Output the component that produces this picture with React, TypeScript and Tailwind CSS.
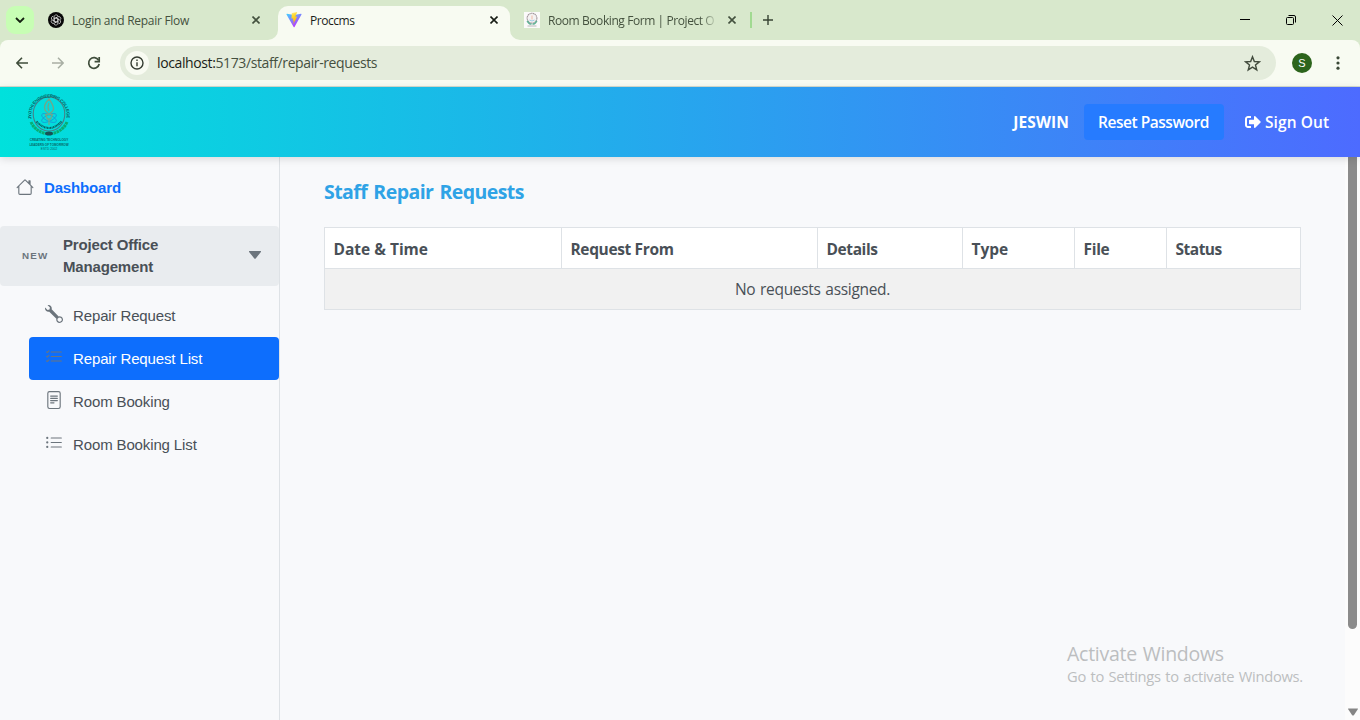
import type { ReactNode } from "react";
import { BsFileText, BsHouse, BsListCheck, BsListUl, BsWrench } from "react-icons/bs";
import { FaSignOutAlt } from "react-icons/fa";

const stroke = { fill: "none", stroke: "currentColor" } as const;

function CloseIcon({ className }: { className: string }) {
  return (
    <svg viewBox="0 0 8 8" className={`h-2 w-2 shrink-0 ${className}`} {...stroke} strokeWidth="1.6">
      <path d="M.5.5l7 7M7.5.5l-7 7" />
    </svg>
  );
}

function ChatIcon() {
  return (
    <svg viewBox="0 0 16 16" className="h-4 w-4 shrink-0">
      <circle cx="8" cy="8" r="8" fill="#080808" />
      <g fill="none" stroke="#d6d6d6" strokeWidth=".75">
        {[0, 60, 120, 180, 240, 300].map((a) => (
          <path key={a} transform={`rotate(${a} 8 8)`} d="M6.1 9.2V4.9a2.1 2.1 0 0 1 3.9-1M6.1 6.9l3.3-1.9" />
        ))}
      </g>
    </svg>
  );
}

function ViteIcon() {
  return (
    <svg viewBox="0 0 32 32" className="h-4 w-4 shrink-0">
      <defs>
        <linearGradient id="vite-a" x1="0" y1="0" x2=".6" y2="1">
          <stop offset="0" stopColor="#41d1ff" />
          <stop offset="1" stopColor="#bd34fe" />
        </linearGradient>
        <linearGradient id="vite-b" x1=".4" y1="0" x2=".6" y2="1">
          <stop offset="0" stopColor="#ffea83" />
          <stop offset=".2" stopColor="#ffdd35" />
          <stop offset="1" stopColor="#ffa800" />
        </linearGradient>
      </defs>
      <path d="M31 5L17 30a1 1 0 0 1-1.700 0L1 5a1 1 0 0 1 1-1.500l14 2.500 14-2.500A1 1 0 0 1 31 5z" fill="url(#vite-a)" />
      <path d="M22.500.200L12 2.200a.5.5 0 0 0-.4.4L11 13.300l3.500-.7-.9 5 2.200-.6-1.600 8 8.300-16-4 .7z" fill="url(#vite-b)" />
    </svg>
  );
}

function CollegeFavicon() {
  return (
    <svg viewBox="0 0 16 16" className="h-4 w-4 shrink-0">
      <path d="M0 0h16v16H0z" fill="#fbfafa" />
      <circle cx="8" cy="6.200" r="4.900" fill="#f5f3f3" stroke="#a3989d" strokeWidth="1.100" strokeDasharray="1.400 .4" />
      <path d="M8 3.500v4" stroke="#f0b9a4" />
      <path d="M5.500 8q2.500 2 5 0" stroke="#9ccbe2" fill="none" />
      <path d="M3.200 8.800q1.800 3.400 4.300 3.200M12.800 8.800q-1.800 3.400-4.300 3.200" stroke="#62b296" strokeWidth="1.600" fill="none" />
      <path d="M3.500 14h9" stroke="#b9b9b9" />
    </svg>
  );
}

function CollegeLogo() {
  return (
    <svg viewBox="0 0 44 60" className="h-[60px] w-11 overflow-visible" fontFamily="Liberation Sans, sans-serif" fontWeight="700">
      <defs>
        <path id="seal-top" d="M4.500 27A17.800 18.300 0 1 1 39.500 27L38 33" />
      </defs>
      <ellipse cx="22" cy="22" rx="15.800" ry="17" fill="none" stroke="#477f86" strokeWidth="1.100" />
      <text fontSize="4.300" fill="#075c5d" letterSpacing="-.28">
        <textPath href="#seal-top">JYOTHI ENGINEERING COLLEGE</textPath>
      </text>
      <g fill="none" stroke="#1899d4" strokeWidth=".8">
        <ellipse cx="22" cy="26" rx="8" ry="3.200" transform="rotate(25 22 26)" />
        <ellipse cx="22" cy="26" rx="8" ry="3.200" transform="rotate(-25 22 26)" />
      </g>
      <g fill="none" stroke="#6fa88b" strokeWidth="1.300">
        <path d="M22 7q-6 6-4 11 1 2 4 4 4-2 4.500-5 0-4-4.500-10zM22 11q-2 4 0 8" />
        <path d="M18.500 22.500h7l-2 4.500h-3zM22 27v6" />
      </g>
      <path d="M9.500 29.500Q22 42.500 34.500 29.500" fill="none" stroke="#08605f" strokeWidth="2" strokeDasharray="1.300 .5 .8 .5" />
      <g fill="none" stroke="#09ad73" strokeWidth="3" strokeDasharray="2.600 .5">
        <path d="M4 30Q8 39 18.500 41.500M40 30Q36 39 25.500 41.500" />
      </g>
      <ellipse cx="22" cy="41.500" rx="4" ry="2.100" fill="#175156" />
      <g fill="#086869" textAnchor="middle">
        <text x="22" y="49.300" fontSize="3.100">CREATING TECHNOLOGY</text>
        <text x="22" y="53.500" fontSize="3.050">LEADERS OF TOMORROW</text>
        <text x="22" y="57.600" fontSize="3.200" fontWeight="400">ESTD 2002</text>
      </g>
    </svg>
  );
}

function TabStrip() {
  return (
    <div className="flex h-10 items-start bg-[#d8e8cc] text-[12px] text-[#44513e]">
      <div className="ml-1.5 mt-1.5 flex h-7 w-7 items-center justify-center rounded-[9px] bg-[#c7feb4]">
        <svg viewBox="0 0 10 6" className="h-1.5 w-2.5 text-[#142010]" {...stroke} strokeWidth="1.8">
          <path d="M1 1l4 4 4-4" />
        </svg>
      </div>
      <div className="ml-3.5 flex h-10 w-[230px] items-center">
        <ChatIcon />
        <span className="ml-2 w-[180px] pt-0.5 tracking-[-0.28px]">Login and Repair Flow</span>
        <CloseIcon className="text-[#43513e]" />
      </div>
      <div className="relative mt-1.5 flex h-[34px] w-[232px] items-center rounded-t-[10px] bg-[#f8fbf2] pb-1.5 text-[#1b1d1a]">
        <svg viewBox="0 0 10 10" className="absolute -left-2.5 bottom-0 h-2.5 w-2.5 text-[#f8fbf2]">
          <path d="M10 0v10H0A10 10 0 0 0 10 0z" fill="currentColor" />
        </svg>
        <svg viewBox="0 0 10 10" className="absolute -right-2.5 bottom-0 h-2.5 w-2.5 text-[#f8fbf2]">
          <path d="M0 0v10h10A10 10 0 0 1 0 0z" fill="currentColor" />
        </svg>
        <div className="ml-2 flex items-center">
          <ViteIcon />
          <span className="ml-2 w-[180px] pt-0.5 tracking-[-0.45px]">Proccms</span>
          <CloseIcon className="text-[#171c15]" />
        </div>
      </div>
      <div className="ml-3.5 flex h-10 items-center">
        <CollegeFavicon />
        <span className="ml-2 w-[167px] overflow-hidden whitespace-nowrap pt-0.5 tracking-[-0.42px] [mask-image:linear-gradient(to_right,black_152px,transparent_170px)]">
          Room Booking Form | Project O
        </span>
        <CloseIcon className="ml-[13px] text-[#43513e]" />
        <div className="ml-3.5 h-4 w-0.5 bg-[#a1da91]" />
        <svg viewBox="0 0 10 10" className="ml-[11px] h-2.5 w-2.5 text-[#374333]" {...stroke} strokeWidth="1.4">
          <path d="M5 0v10M0 5h10" />
        </svg>
      </div>
      <div className="ml-auto flex h-10 items-center pr-[17px] text-black">
        <svg viewBox="0 0 10 10" className="mr-9 h-2.5 w-2.5" {...stroke}>
          <path d="M0 4.500h10" />
        </svg>
        <svg viewBox="0 0 10 10" className="mr-9 h-2.5 w-2.5" {...stroke}>
          <rect x=".5" y="2.500" width="7" height="7" rx="1" />
          <path d="M2.500 .5H8q1.500 0 1.500 1.500v5.500" />
        </svg>
        <svg viewBox="0 0 11 11" className="h-[11px] w-[11px]" {...stroke}>
          <path d="M.5.5l10 10M10.500.5l-10 10" />
        </svg>
      </div>
    </div>
  );
}

function Toolbar() {
  return (
    <div className="h-[47px] bg-[#d8e8cc]">
      <div className="flex h-[47px] items-center rounded-t-[8px] border-b border-[#d5dccf] bg-[#f8fbf2] pl-4 text-[#3f4d3b]">
        <svg viewBox="0 0 12 12" className="h-3 w-3" {...stroke} strokeWidth="1.6">
          <path d="M12 6H1M6 .7L.9 6 6 11.300" />
        </svg>
        <svg viewBox="0 0 12 12" className="ml-6 h-3 w-3 text-[#a9afa4]" {...stroke} strokeWidth="1.5">
          <path d="M0 6h11M6 .7L11.100 6 6 11.300" />
        </svg>
        <svg viewBox="0 0 14 14" className="ml-[23px] h-3.5 w-3.5" {...stroke} strokeWidth="1.700">
          <path d="M11.600 4.300A5.300 5.300 0 1 0 12.200 8" />
          <path d="M12.200 1v4.600H7.600" />
        </svg>
        <div className="ml-[19px] flex h-[34px] w-[1156px] items-center rounded-full bg-[#e4ecdc] pl-[5px] pr-[15px]">
          <div className="flex h-6 w-6 items-center justify-center rounded-full bg-[#f8fbf2] text-[#343c31]">
            <svg viewBox="0 0 14 14" className="h-3.5 w-3.5" {...stroke} strokeWidth="1.400">
              <circle cx="7" cy="7" r="6" />
              <path d="M7 6.200v4M7 3.500v1.500" />
            </svg>
          </div>
          <span className="ml-2 pb-px text-[14px] tracking-[-0.39px] text-[#44503f]">
            <span className="text-[#191d18]">localhost:</span>5173/staff/repair-requests
          </span>
          <svg viewBox="0 0 24 24" className="ml-auto h-[17px] w-[17px] text-[#424b3d]" {...stroke} strokeWidth="2">
            <path d="M12 2.500l2.600 6.700 7.100.4-5.500 4.500 1.800 7L12 17.200l-6 3.900 1.800-7-5.500-4.500 7.100-.4z" />
          </svg>
        </div>
        <div className="ml-4 flex h-5 w-5 items-center justify-center rounded-full bg-[#2c641c] font-['Liberation_Sans',sans-serif] text-[11px] text-white">S</div>
        <svg viewBox="0 0 4 14" className="ml-6 h-3.5 w-1" fill="#3a4836">
          <circle cx="2" cy="1.800" r="1.600" />
          <circle cx="2" cy="7" r="1.600" />
          <circle cx="2" cy="12.200" r="1.600" />
        </svg>
      </div>
    </div>
  );
}

function SubItem({ icon, label, active = false }: { icon: ReactNode; label: string; active?: boolean }) {
  return (
    <li className={`flex h-[43px] items-center rounded-[4px] pl-4 pt-0.5 ${active ? "bg-[#0d6efd] text-white" : "text-[#495057]"}`}>
      <span className="mb-[5px] text-[18px] text-[#6c757d]">{icon}</span>
      <span className="ml-2.5 tracking-[-0.13px]">{label}</span>
    </li>
  );
}

function Sidebar() {
  return (
    <aside className="w-[280px] shrink-0 border-r border-[#dee2e6] bg-[#f8f9fb] font-['Liberation_Sans',Arial,sans-serif] text-[15px]">
      <div className="mt-[9px] flex h-11 items-center pl-4 font-bold text-[#0d6efd]">
        <BsHouse className="mb-0.5 h-[18px] w-[18px] text-[#6c757d]" />
        <span className="ml-2.5 tracking-[-0.15px]">Dashboard</span>
      </div>
      <div className="mt-4 flex h-[60px] items-center rounded-[4px] bg-[#e9ecef] pl-[22px] pr-[18px] font-bold text-[#495057]">
        <span className="w-[41px] text-[9.800px] tracking-[1.2px] text-[#6c757d]">NEW</span>
        <span className="w-[120px] leading-[22px] tracking-[-0.17px]">Project Office Management</span>
        <svg viewBox="0 0 12 8" className="mb-0.5 ml-auto h-2 w-3" fill="#6c757d">
          <path d="M.5 0h11a.5.5 0 0 1 .4.9L6.700 7.500a1 1 0 0 1-1.400 0L.1.900A.5.5 0 0 1 .5 0z" />
        </svg>
      </div>
      <ul className="ml-[29px] mt-2">
        <SubItem icon={<BsWrench />} label="Repair Request" />
        <SubItem icon={<BsListCheck />} label="Repair Request List" active />
        <SubItem icon={<BsFileText />} label="Room Booking" />
        <SubItem icon={<BsListUl />} label="Room Booking List" />
      </ul>
    </aside>
  );
}

function Requests() {
  return (
    <main className="grow bg-[#f8f9fb] pl-11 pt-[21px] text-[#495057]">
      <h1 className="text-[19.500px] font-bold leading-7 tracking-[-0.55px] text-[#2fa3e6] [word-spacing:1.5px]">Staff Repair Requests</h1>
      <table className="mt-[21px] w-[977px] table-fixed border-collapse text-[16px]">
        <colgroup>
          <col className="w-[237px]" />
          <col className="w-[256px]" />
          <col className="w-[145px]" />
          <col className="w-[112px]" />
          <col className="w-[92px]" />
          <col className="w-[134px]" />
        </colgroup>
        <thead>
          <tr className="h-[41px] bg-white text-left text-[15.500px] [&>th]:border [&>th]:border-[#dee2e6] [&>th]:pl-[8.500px] [&>th]:pt-[3px]">
            <th>Date &amp; Time</th>
            <th className="tracking-[-0.36px]">Request From</th>
            <th className="tracking-[-0.4px]">Details</th>
            <th>Type</th>
            <th className="tracking-[-0.3px]">File</th>
            <th className="tracking-[-0.5px]">Status</th>
          </tr>
        </thead>
        <tbody>
          <tr className="h-[41px] bg-[#f1f1f1]">
            <td colSpan={6} className="border border-[#dee2e6] pt-0.5 text-center text-[15.500px] tracking-[-0.31px] [word-spacing:1px]">No requests assigned.</td>
          </tr>
        </tbody>
      </table>
    </main>
  );
}

export default function App() {
  return (
    <div className="relative flex h-[720px] w-[1360px] flex-col overflow-hidden font-['Open_Sans','Noto_Sans',sans-serif]">
      <TabStrip />
      <Toolbar />
      <header className="z-10 flex h-[70px] shrink-0 items-center bg-linear-to-r/srgb from-[#00e1dc] to-[#4d6bff] pl-[27px] pr-[30px] text-[15.500px] font-semibold text-white shadow-[0_2px_8px_rgba(0,0,0,0.13)]">
        <CollegeLogo />
        <span className="ml-auto pt-0.5 font-bold tracking-[0.1px]">JESWIN</span>
        <button className="ml-[15px] h-9 w-[140px] rounded-[4px] bg-[#267bff] pr-px pt-0.5 tracking-[-0.47px]">Reset Password</button>
        <FaSignOutAlt className="ml-[21px] h-4 w-4" />
        <span className="ml-1 w-[65px] whitespace-nowrap pt-0.5 tracking-[0.1px]">Sign Out</span>
      </header>
      <div className="flex grow">
        <Sidebar />
        <Requests />
        <div className="flex w-[15px] flex-col items-center bg-[#fcfcfc]">
          <div className="h-[472px] w-[9px] rounded-b-full bg-[#8b8b8b]" />
          <svg viewBox="0 0 10 8" className="mb-1 mt-auto h-2 w-2.5" fill="#858585">
            <path d="M.5.5h9q.8 0 .3.8L6 7q-1 1-2 0L.2 1.300Q-.3.500.5.5z" />
          </svg>
        </div>
      </div>
      <div className="absolute left-[1067px] top-[642px] text-[#bcbec0]">
        <div className="text-[19.500px] leading-6 tracking-[-0.26px] [word-spacing:1px]">Activate Windows</div>
        <div className="text-[14.700px] leading-[21px] tracking-[-0.28px] [word-spacing:1px]">Go to Settings to activate Windows.</div>
      </div>
    </div>
  );
}
